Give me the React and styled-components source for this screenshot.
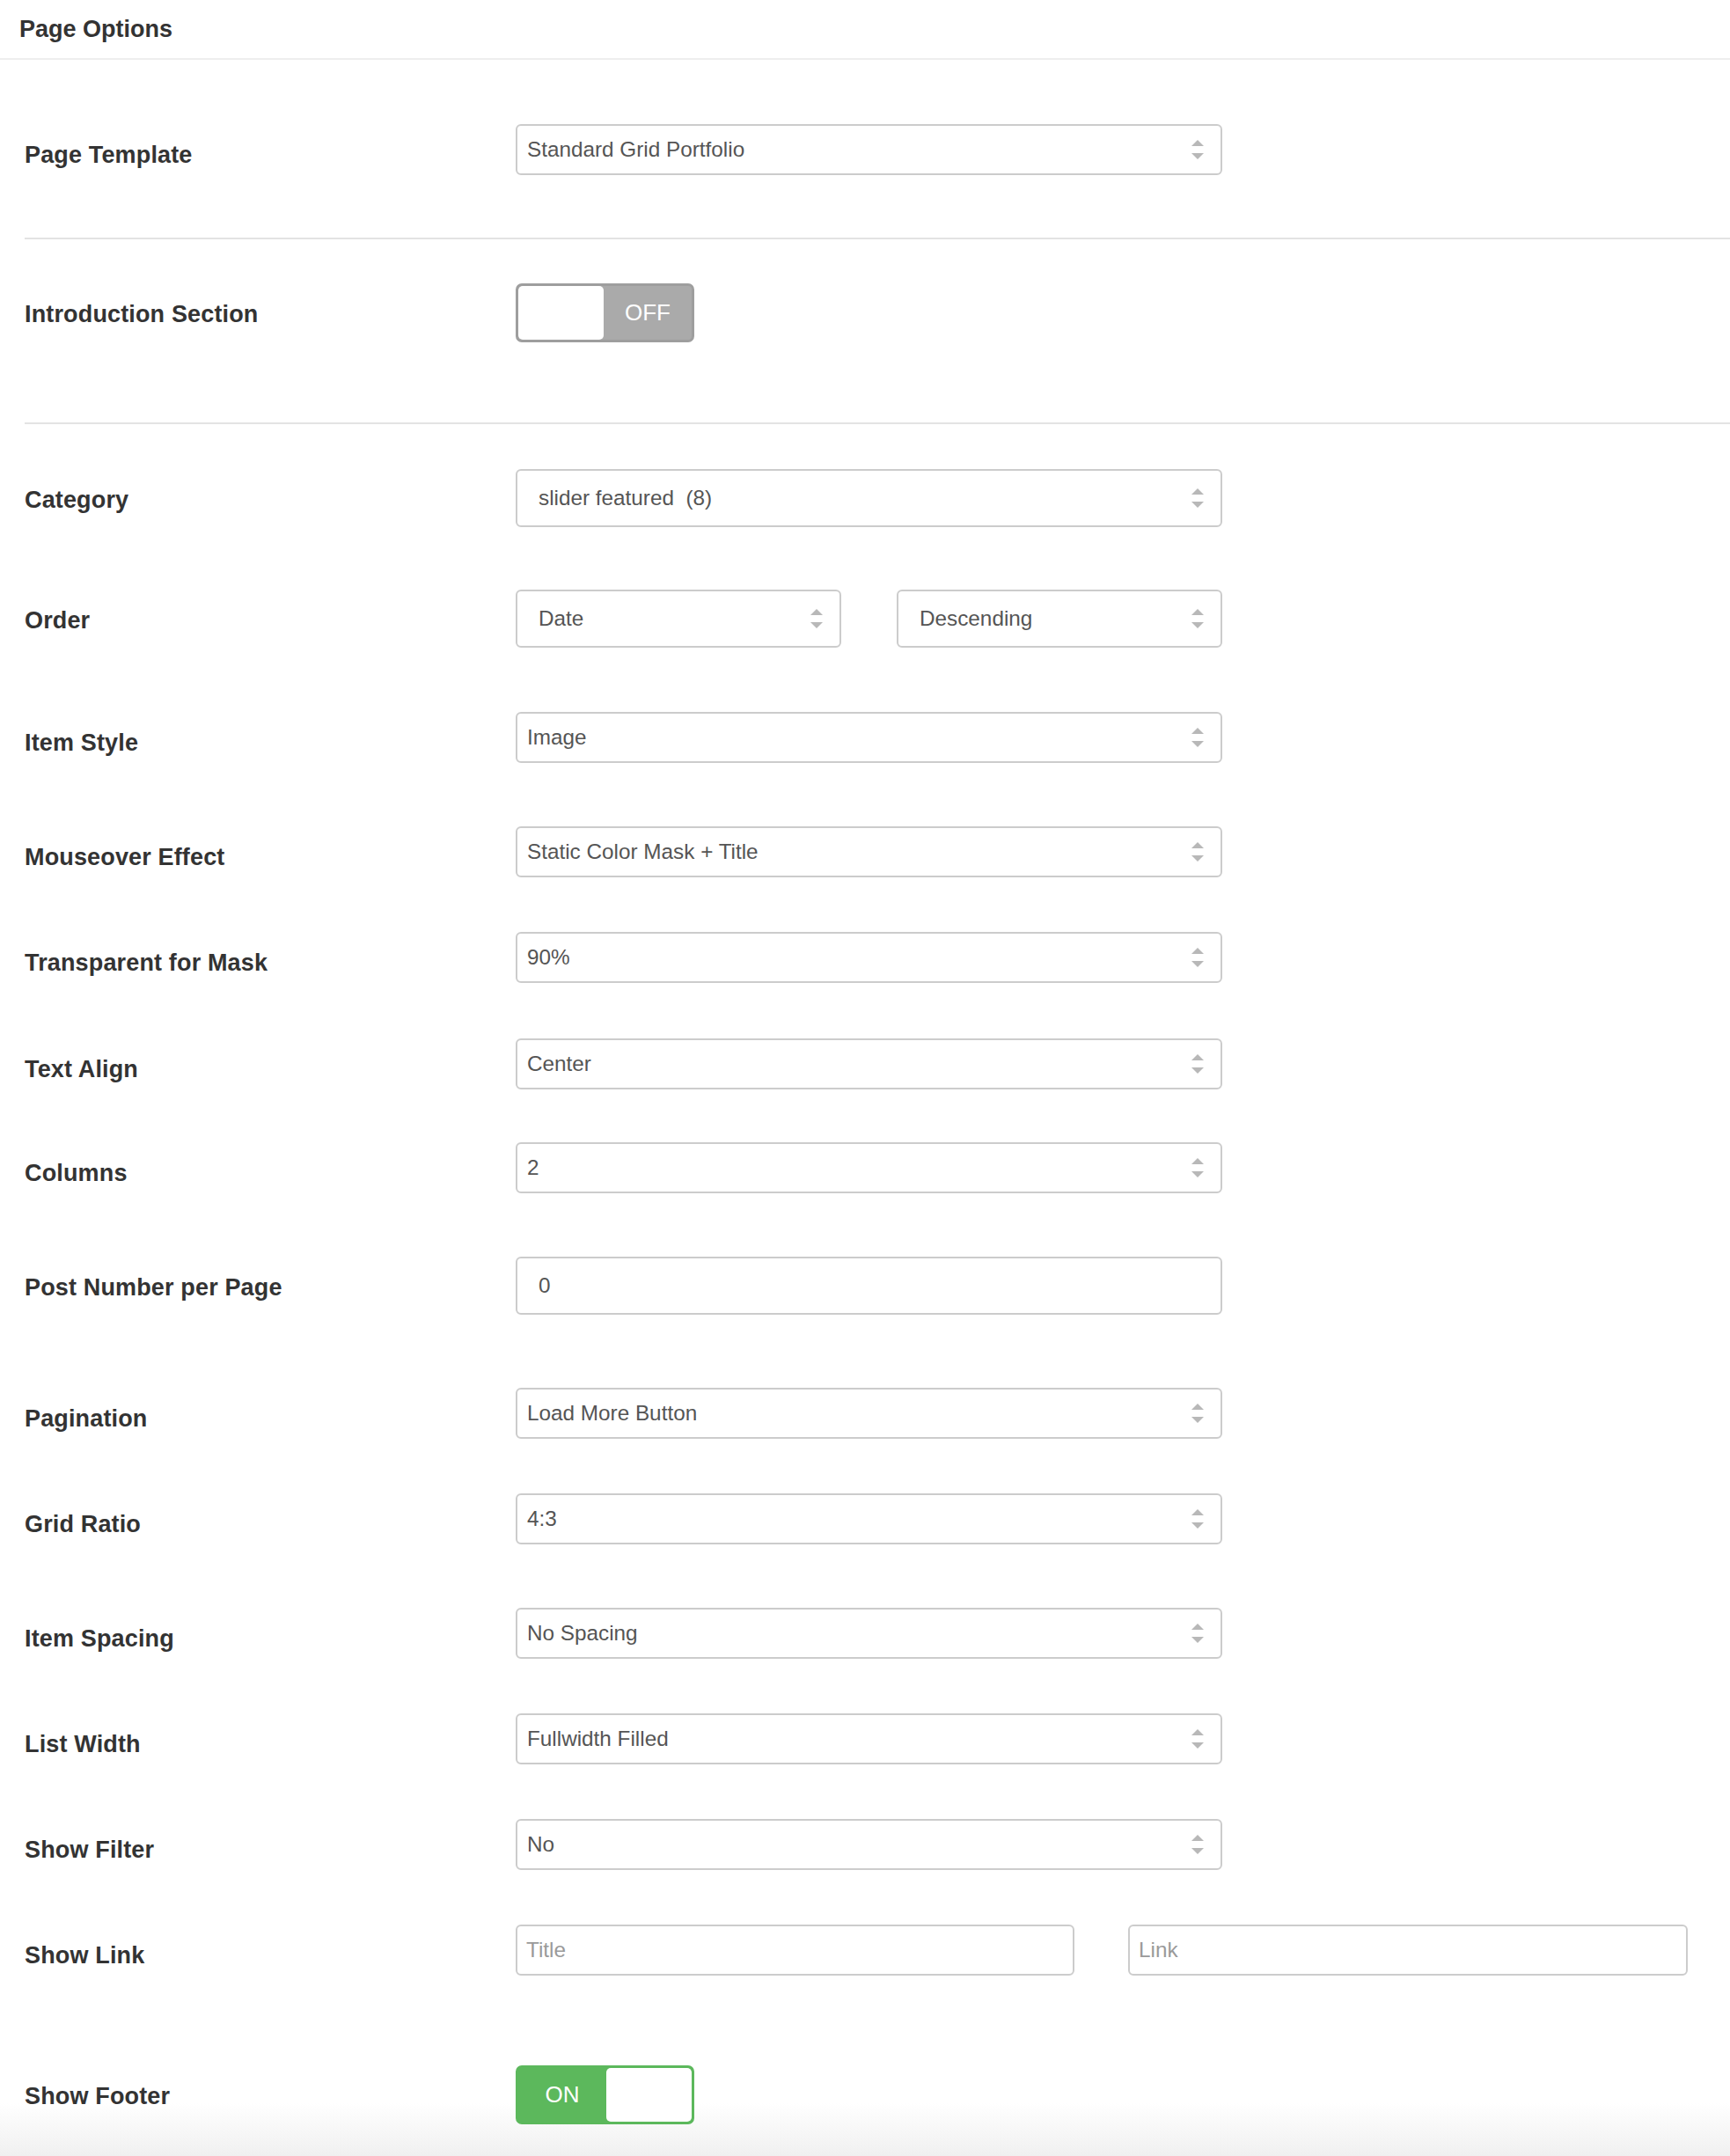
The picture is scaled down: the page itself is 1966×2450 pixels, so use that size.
import React from "react";
import styled, { createGlobalStyle } from "styled-components";

const Global = createGlobalStyle`
  html, body {
    margin: 0;
    padding: 0;
    background: #fff;
  }
  body {
    font-family: "Liberation Sans", Arial, Helvetica, sans-serif;
    color: #333;
  }
`;

const Page = styled.div`
  min-height: 2450px;
  background: linear-gradient(to bottom, #fff 0, #fff 2390px, #f0f0f0 2450px);
`;

const Header = styled.header`
  height: 66px;
  display: flex;
  align-items: center;
  padding-left: 22px;
  border-bottom: 2px solid #eeeeee;
  font-size: 27px;
  font-weight: bold;
  color: #333;
`;

const Body = styled.div`
  padding-left: 28px;
`;

const Divider = styled.hr`
  margin: ${(p) => p.$mt}px 0 0 0;
  border: 0;
  height: 2px;
  background: #e3e3e3;
`;

const Row = styled.div`
  display: flex;
  align-items: flex-start;
  margin-top: ${(p) => p.$mt}px;
`;

const Label = styled.div`
  width: 558px;
  flex-shrink: 0;
  padding-top: 20px;
  line-height: 30px;
  font-size: 27px;
  letter-spacing: 0.15px;
  font-weight: bold;
  color: #333;
`;

const Controls = styled.div`
  display: flex;
  gap: ${(p) => p.$gap || 0}px;
`;

const Select = styled.div`
  box-sizing: border-box;
  position: relative;
  width: ${(p) => p.$w || 803}px;
  height: ${(p) => (p.$tall ? 66 : 58)}px;
  border: 2px solid #cccccc;
  border-radius: 6px;
  background: #fff;
  display: flex;
  align-items: center;
  padding-left: ${(p) => (p.$tall ? 24 : 11)}px;
  font-size: 24.3px;
  color: #555;
  white-space: pre;
`;

const Input = styled.div`
  box-sizing: border-box;
  width: ${(p) => p.$w || 803}px;
  height: ${(p) => (p.$tall ? 66 : 58)}px;
  border: 2px solid #cccccc;
  border-radius: 6px;
  background: #fff;
  display: flex;
  align-items: center;
  padding-left: ${(p) => (p.$tall ? 24 : 10)}px;
  font-size: 24.3px;
  color: ${(p) => (p.$placeholder ? "#9a9a9a" : "#555")};
`;

const Arrows = styled.svg`
  position: absolute;
  right: 19px;
  top: 50%;
  transform: translateY(-50%);
`;

const Toggle = styled.div`
  box-sizing: border-box;
  width: 203px;
  height: 67px;
  border: 3px solid ${(p) => (p.$on ? "#5cb85c" : "#9e9e9e")};
  background: ${(p) => (p.$on ? "#5cb85c" : "#aaaaaa")};
  border-radius: 7px;
  display: flex;
  flex-direction: ${(p) => (p.$on ? "row" : "row-reverse")};
  overflow: hidden;
`;

const ToggleText = styled.div`
  flex: 1;
  display: flex;
  align-items: center;
  justify-content: center;
  color: #fff;
  font-size: 26px;
`;

const Knob = styled.div`
  width: 97px;
  background: #fff;
  border-radius: 5px;
`;

const SelectArrows = () => (
  <Arrows width="14" height="22" viewBox="0 0 14 22">
    <polygon points="0,7 7,0 14,7" fill="#b8b8b8" />
    <polygon points="0,15 14,15 7,22" fill="#b8b8b8" />
  </Arrows>
);

const Dropdown = ({ value, w, tall }) => (
  <Select $w={w} $tall={tall}>
    {value}
    <SelectArrows />
  </Select>
);

const Switch = ({ on }) => (
  <Toggle $on={on}>
    <ToggleText>{on ? "ON" : "OFF"}</ToggleText>
    <Knob />
  </Toggle>
);

const rows = [
  { label: "Category", mt: 51, control: <Dropdown value="slider featured  (8)" tall /> },
  {
    label: "Order",
    mt: 71,
    control: (
      <Controls $gap={63}>
        <Dropdown value="Date" w={370} tall />
        <Dropdown value="Descending" w={370} tall />
      </Controls>
    ),
  },
  { label: "Item Style", mt: 73, control: <Dropdown value="Image" /> },
  { label: "Mouseover Effect", mt: 72, control: <Dropdown value="Static Color Mask + Title" /> },
  { label: "Transparent for Mask", mt: 62, control: <Dropdown value="90%" /> },
  { label: "Text Align", mt: 63, control: <Dropdown value="Center" /> },
  { label: "Columns", mt: 60, control: <Dropdown value="2" /> },
  { label: "Post Number per Page", mt: 72, control: <Input $tall>0</Input> },
  { label: "Pagination", mt: 83, control: <Dropdown value="Load More Button" /> },
  { label: "Grid Ratio", mt: 62, control: <Dropdown value="4:3" /> },
  { label: "Item Spacing", mt: 72, control: <Dropdown value="No Spacing" /> },
  { label: "List Width", mt: 62, control: <Dropdown value="Fullwidth Filled" /> },
  { label: "Show Filter", mt: 62, control: <Dropdown value="No" /> },
  {
    label: "Show Link",
    mt: 62,
    control: (
      <Controls $gap={61}>
        <Input $w={635} $placeholder>Title</Input>
        <Input $w={636} $placeholder>Link</Input>
      </Controls>
    ),
  },
  { label: "Show Footer", mt: 102, control: <Switch on /> },
];

export default function App() {
  return (
    <Page>
      <Global />
      <Header>Page Options</Header>
      <Body>
        <Row $mt={73}>
          <Label>Page Template</Label>
          <Dropdown value="Standard Grid Portfolio" />
        </Row>
        <Divider $mt={71} />
        <Row $mt={50}>
          <Label>Introduction Section</Label>
          <Switch on={false} />
        </Row>
        <Divider $mt={91} />
        {rows.map((r) => (
          <Row key={r.label} $mt={r.mt}>
            <Label>{r.label}</Label>
            {r.control}
          </Row>
        ))}
      </Body>
    </Page>
  );
}
